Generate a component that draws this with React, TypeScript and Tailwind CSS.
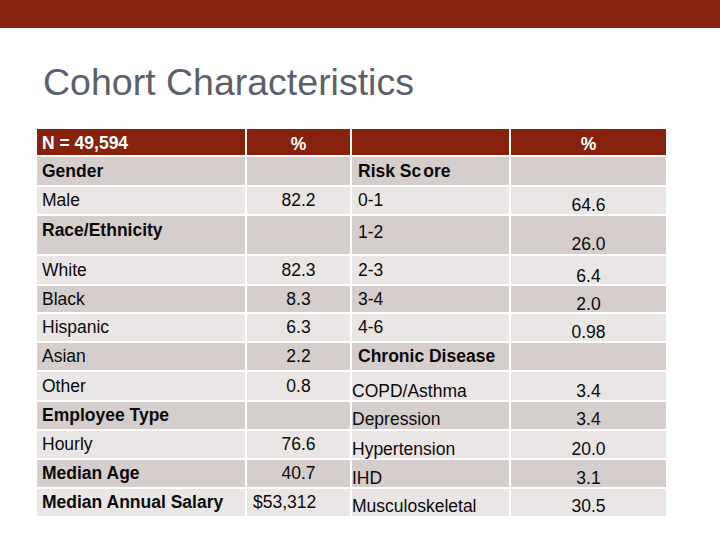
import React from "react"

type Cell = {
  t?: React.ReactNode
  b?: boolean
  c?: boolean // centred horizontally
  v?: string // vertical alignment / offset classes
  pl?: string
}

type Row = { h: string; bg: string; cells: Cell[] }

const DARK = "bg-[#d6cdcd]"
const LIGHT = "bg-[#ebe6e6]"

// col1 label, col2 value, col3 label, col4 value
const rows: Row[] = [
  {
    h: "h-[26px]",
    bg: "bg-[#87220f] text-white",
    cells: [
      { t: "N = 49,594", b: true, v: "items-center pt-[2px]" },
      { t: "%", b: true, c: true, v: "items-center pt-[4px]" },
      {},
      { t: "%", b: true, c: true, v: "items-center pt-[4px]" },
    ],
  },
  {
    h: "h-[28px]",
    bg: DARK,
    cells: [
      { t: "Gender", b: true },
      {},
      {
        t: (
          <>
            Risk Sc<span className="ml-[2px]">ore</span>
          </>
        ),
        b: true,
        pl: "pl-[6px]",
      },
      {},
    ],
  },
  {
    h: "h-[27px]",
    bg: LIGHT,
    cells: [
      { t: "Male" },
      { t: "82.2", c: true },
      { t: "0-1", pl: "pl-[6px]" },
      { t: "64.6", c: true, v: "items-center pt-[10px]" },
    ],
  },
  {
    h: "h-[38px]",
    bg: DARK,
    cells: [
      { t: "Race/Ethnicity", b: true, v: "items-start pt-[4px]" },
      {},
      { t: "1-2", pl: "pl-[6px]", v: "items-start pt-[6px]" },
      { t: "26.0", c: true, v: "items-end" },
    ],
  },
  {
    h: "h-[28px]",
    bg: LIGHT,
    cells: [
      { t: "White" },
      { t: "82.3", c: true },
      { t: "2-3", pl: "pl-[6px]" },
      { t: "6.4", c: true, v: "items-center pt-[12px]" },
    ],
  },
  {
    h: "h-[26px]",
    bg: DARK,
    cells: [
      { t: "Black" },
      { t: "8.3", c: true },
      { t: "3-4", pl: "pl-[6px]" },
      { t: "2.0", c: true, v: "items-center pt-[10px]" },
    ],
  },
  {
    h: "h-[27px]",
    bg: LIGHT,
    cells: [
      { t: "Hispanic" },
      { t: "6.3", c: true },
      { t: "4-6", pl: "pl-[6px]" },
      { t: "0.98", c: true, v: "items-center pt-[10px]" },
    ],
  },
  {
    h: "h-[27px]",
    bg: DARK,
    cells: [
      { t: "Asian" },
      { t: "2.2", c: true },
      { t: "Chronic Disease", b: true, pl: "pl-[6px]" },
      {},
    ],
  },
  {
    h: "h-[28px]",
    bg: LIGHT,
    cells: [
      { t: "Other" },
      { t: "0.8", c: true },
      { t: "COPD/Asthma", pl: "pl-0", v: "items-center pt-[10px]" },
      { t: "3.4", c: true, v: "items-center pt-[10px]" },
    ],
  },
  {
    h: "h-[27px]",
    bg: DARK,
    cells: [
      { t: "Employee Type", b: true },
      {},
      { t: "Depression", pl: "pl-0", v: "items-center pt-[8px]" },
      { t: "3.4", c: true, v: "items-center pt-[8px]" },
    ],
  },
  {
    h: "h-[27px]",
    bg: LIGHT,
    cells: [
      { t: "Hourly" },
      { t: "76.6", c: true },
      { t: "Hypertension", pl: "pl-0", v: "items-center pt-[9px]" },
      { t: "20.0", c: true, v: "items-center pt-[9px]" },
    ],
  },
  {
    h: "h-[27px]",
    bg: DARK,
    cells: [
      { t: "Median Age", b: true },
      { t: "40.7", c: true },
      { t: "IHD", pl: "pl-0", v: "items-center pt-[9px]" },
      { t: "3.1", c: true, v: "items-center pt-[9px]" },
    ],
  },
  {
    h: "h-[27px]",
    bg: LIGHT,
    cells: [
      { t: "Median Annual Salary", b: true },
      { t: "$53,312", pl: "pl-[6px]" },
      { t: "Musculoskeletal", pl: "pl-0", v: "items-center pt-[8px]" },
      { t: "30.5", c: true, v: "items-center pt-[8px]" },
    ],
  },
]

export default function App() {
  return (
    <div className="w-[720px] h-[540px] bg-white overflow-hidden font-['Liberation_Sans',Arial,sans-serif]">
      {/* top band */}
      <div className="h-[28px] bg-[#87220f]" />

      <h1 className="pl-[43px] mt-[36px] text-[37.5px] leading-[37.5px] text-[#5b6069] font-normal">
        Cohort Characteristics
      </h1>

      <div className="ml-[37px] mt-[27px] grid grid-cols-[208px_103px_157px_155px] gap-x-[2px] gap-y-[2px] text-[17.5px] leading-[20px] text-[#0a0a0a]">
        {rows.map((row, ri) =>
          row.cells.map((cell, ci) => (
            <div
              key={`${ri}-${ci}`}
              className={`${row.h} ${row.bg} flex whitespace-nowrap overflow-visible ${
                cell.v ?? "items-center"
              } ${cell.c ? "justify-center" : "justify-start"} ${
                cell.pl ?? (ci === 0 ? "pl-[5px]" : "")
              } ${cell.b ? "font-bold" : ""}`}
            >
              {cell.t}
            </div>
          ))
        )}
      </div>
    </div>
  )
}
